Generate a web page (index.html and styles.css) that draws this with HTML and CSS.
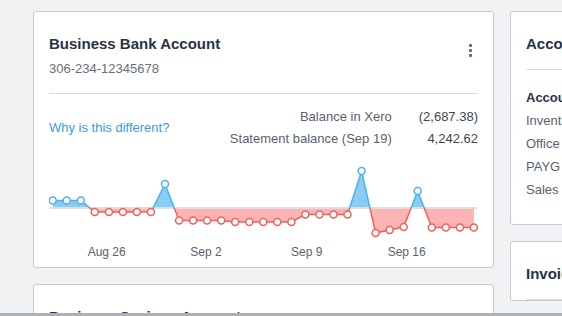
FILE: index.html
```html
<!DOCTYPE html>
<html lang="en">
<head>
    <meta charset="UTF-8">
    <title>Dashboard</title>
    <link rel="stylesheet" href="styles.css">
</head>
<body>
    <div class="dashboard">
        <div class="column">
            <section class="card">
                <div class="card-header">
                    <div>
                        <h2 class="card-title">Business Bank Account</h2>
                        <p class="card-subtitle">306-234-12345678</p>
                    </div>
                    <button class="kebab" aria-label="More options"><span></span><span></span><span></span></button>
                </div>

                <div class="balances">
                    <a href="#" class="link">Why is this different?</a>
                    <dl class="balance-grid">
                        <dt>Balance in Xero</dt>
                        <dd>(2,687.38)</dd>
                        <dt>Statement balance (Sep 19)</dt>
                        <dd>4,242.62</dd>
                    </dl>
                </div>

                <svg class="chart" width="429" height="116.5" viewBox="0 2 429 116.5">
                    <defs>
                        <clipPath id="above"><rect x="0" y="0" width="429" height="60"/></clipPath>
                        <clipPath id="below"><rect x="0" y="60" width="429" height="60"/></clipPath>
                    </defs>
                    <path class="area-up" clip-path="url(#above)" d="M3.7,60 L3.7,52.5 17.7,52.5 31.8,52.5 45.8,64 59.9,64 73.9,64 87.9,64 102,64 116,36 130.1,72.5 144.1,72.5 158.1,72.5 172.2,72.5 186.2,74 200.3,74 214.3,74 228.3,74 242.4,74 256.4,66.5 270.5,66.5 284.5,66.5 298.5,66.5 312.6,23 326.6,85 340.7,82 354.7,79 368.7,43 382.8,79.5 396.8,79.5 410.9,79.5 424.9,79.5 L424.9,60 Z"/>
                    <path class="area-down" clip-path="url(#below)" d="M3.7,60 L3.7,52.5 17.7,52.5 31.8,52.5 45.8,64 59.9,64 73.9,64 87.9,64 102,64 116,36 130.1,72.5 144.1,72.5 158.1,72.5 172.2,72.5 186.2,74 200.3,74 214.3,74 228.3,74 242.4,74 256.4,66.5 270.5,66.5 284.5,66.5 298.5,66.5 312.6,23 326.6,85 340.7,82 354.7,79 368.7,43 382.8,79.5 396.8,79.5 410.9,79.5 424.9,79.5 L424.9,60 Z"/>
                    <line class="baseline" x1="0" y1="60" x2="428" y2="60"/>
                    <polyline class="line-up" clip-path="url(#above)" points="3.7,52.5 17.7,52.5 31.8,52.5 45.8,64 59.9,64 73.9,64 87.9,64 102,64 116,36 130.1,72.5 144.1,72.5 158.1,72.5 172.2,72.5 186.2,74 200.3,74 214.3,74 228.3,74 242.4,74 256.4,66.5 270.5,66.5 284.5,66.5 298.5,66.5 312.6,23 326.6,85 340.7,82 354.7,79 368.7,43 382.8,79.5 396.8,79.5 410.9,79.5 424.9,79.5"/>
                    <polyline class="line-down" clip-path="url(#below)" points="3.7,52.5 17.7,52.5 31.8,52.5 45.8,64 59.9,64 73.9,64 87.9,64 102,64 116,36 130.1,72.5 144.1,72.5 158.1,72.5 172.2,72.5 186.2,74 200.3,74 214.3,74 228.3,74 242.4,74 256.4,66.5 270.5,66.5 284.5,66.5 298.5,66.5 312.6,23 326.6,85 340.7,82 354.7,79 368.7,43 382.8,79.5 396.8,79.5 410.9,79.5 424.9,79.5"/>

                    <g class="dot-up">
                        <circle cx="3.7" cy="52.5" r="3.5"/>
                        <circle cx="17.7" cy="52.5" r="3.5"/>
                        <circle cx="31.8" cy="52.5" r="3.5"/>
                        <circle cx="116" cy="36" r="3.5"/>
                        <circle cx="312.6" cy="23" r="3.5"/>
                        <circle cx="368.7" cy="43" r="3.5"/>
                    </g>
                    <g class="dot-down">
                        <circle cx="45.8" cy="64" r="3.5"/>
                        <circle cx="59.9" cy="64" r="3.5"/>
                        <circle cx="73.9" cy="64" r="3.5"/>
                        <circle cx="87.9" cy="64" r="3.5"/>
                        <circle cx="102" cy="64" r="3.5"/>
                        <circle cx="130.1" cy="72.5" r="3.5"/>
                        <circle cx="144.1" cy="72.5" r="3.5"/>
                        <circle cx="158.1" cy="72.5" r="3.5"/>
                        <circle cx="172.2" cy="72.5" r="3.5"/>
                        <circle cx="186.2" cy="74" r="3.5"/>
                        <circle cx="200.3" cy="74" r="3.5"/>
                        <circle cx="214.3" cy="74" r="3.5"/>
                        <circle cx="228.3" cy="74" r="3.5"/>
                        <circle cx="242.4" cy="74" r="3.5"/>
                        <circle cx="256.4" cy="66.5" r="3.5"/>
                        <circle cx="270.5" cy="66.5" r="3.5"/>
                        <circle cx="284.5" cy="66.5" r="3.5"/>
                        <circle cx="298.5" cy="66.5" r="3.5"/>
                        <circle cx="326.6" cy="85" r="3.5"/>
                        <circle cx="340.7" cy="82" r="3.5"/>
                        <circle cx="354.7" cy="79" r="3.5"/>
                        <circle cx="382.8" cy="79.5" r="3.5"/>
                        <circle cx="396.8" cy="79.5" r="3.5"/>
                        <circle cx="410.9" cy="79.5" r="3.5"/>
                        <circle cx="424.9" cy="79.5" r="3.5"/>
                    </g>

                    <g class="axis-label">
                        <text x="57.7" y="107.5">Aug 26</text>
                        <text x="157" y="107.5">Sep 2</text>
                        <text x="257.7" y="107.5">Sep 9</text>
                        <text x="357.7" y="107.5">Sep 16</text>
                    </g>
                </svg>
            </section>

            <section class="card">
                <div class="card-header">
                    <div>
                        <h2 class="card-title">Business Savings Account</h2>
                        <p class="card-subtitle">306-234-87654321</p>
                    </div>
                </div>
            </section>
        </div>

        <div class="column">
            <section class="card">
                <div class="card-header">
                    <h2 class="card-title">Account watchlist</h2>
                </div>
                <ul class="watchlist">
                    <li class="watchlist-head">Account</li>
                    <li>Inventory</li>
                    <li>Office Expenses</li>
                    <li>PAYG Withholdings Payable</li>
                    <li>Sales (Revenue)</li>
                </ul>
            </section>

            <section class="card">
                <div class="card-header">
                    <h2 class="card-title">Invoices owed to you</h2>
                </div>
            </section>
        </div>
    </div>

    <div class="bottom-edge"></div>
</body>
</html>
```

FILE: styles.css
```css
:root {
    --page: #f0f2f3;
    --border: #c6cacf;
    --divider: #d9dcdf;
    --heading: #28333f;
    --text: #59626d;
    --value: #3e4650;
    --link: #3b9ade;
    --up: #4db1ef;
    --up-fill: #88cdf3;
    --down: #f0605a;
    --down-fill: #fdb3b3;
}

* {
    box-sizing: border-box;
    margin: 0;
    padding: 0;
}

body {
    font-family: "Liberation Sans", Arial, sans-serif;
    background: var(--page);
    color: var(--text);
    width: 562px;
    height: 316px;
    overflow: hidden;
}

.dashboard {
    display: flex;
    gap: 16px;
    padding: 11px 0 0 33px;
}

.column {
    display: flex;
    flex-direction: column;
    gap: 16px;
    flex: 0 0 461px;
}

.card {
    background: #fff;
    border: 1px solid var(--border);
    border-radius: 3px;
    padding: 23px 15px 0;
}

.card-header {
    display: flex;
    justify-content: space-between;
    align-items: flex-start;
    padding-bottom: 16px;
    border-bottom: 1px solid var(--divider);
}

.card-title {
    font-size: 15px;
    line-height: 18px;
    font-weight: 700;
    color: var(--heading);
    white-space: nowrap;
}

.card-subtitle {
    font-size: 13px;
    line-height: 16px;
    margin-top: 8px;
    color: #686f77;
}

.kebab {
    display: flex;
    flex-direction: column;
    align-items: center;
    gap: 2px;
    width: 16px;
    margin-top: 9px;
    background: none;
    border: none;
    cursor: pointer;
}

.kebab span {
    width: 3px;
    height: 3px;
    border-radius: 1px;
    background: #5d6675;
}

.balances {
    display: flex;
    justify-content: space-between;
    align-items: center;
    margin-top: 12px;
    font-size: 13px;
    line-height: 22px;
}

.link {
    color: var(--link);
    text-decoration: none;
}

.balance-grid {
    display: grid;
    grid-template-columns: auto auto;
    column-gap: 27px;
    text-align: right;
}

.balance-grid dd {
    color: var(--value);
}

.chart {
    display: block;
}

.area-up {
    fill: var(--up-fill);
}

.area-down {
    fill: var(--down-fill);
}

.baseline {
    stroke: #dcdfe2;
    stroke-width: 2;
}

.line-up,
.line-down {
    fill: none;
    stroke-width: 1.5;
}

.line-up {
    stroke: var(--up);
}

.line-down {
    stroke: var(--down);
}

.dot-up circle,
.dot-down circle {
    fill: #fff;
    stroke-width: 1.5;
}

.dot-up circle {
    stroke: var(--up);
}

.dot-down circle {
    stroke: var(--down);
}

.axis-label text {
    font-family: "Liberation Sans", Arial, sans-serif;
    font-size: 12px;
    fill: var(--text);
    text-anchor: middle;
}

.watchlist {
    list-style: none;
    padding: 16px 0 23px;
    font-size: 13px;
    line-height: 23px;
    white-space: nowrap;
}

.watchlist-head {
    font-weight: 700;
    color: var(--heading);
}

.bottom-edge {
    position: fixed;
    left: 0;
    right: 0;
    bottom: 0;
    height: 3px;
    background: #aeb1b4;
}
```
